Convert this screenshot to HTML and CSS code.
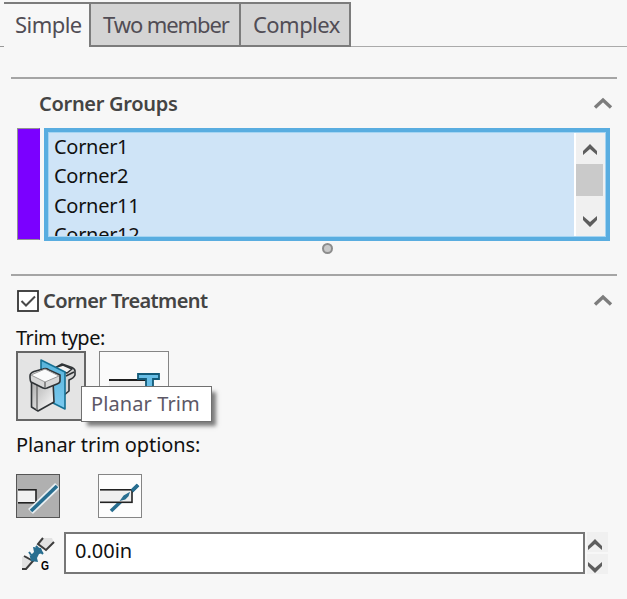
FILE: index.html
```html
<!DOCTYPE html>
<html lang="en">
<head>
    <meta charset="UTF-8">
    <meta name="viewport" content="width=device-width, initial-scale=1.0">
    <title>Corner Trim</title>
    <link rel="stylesheet" href="styles.css">
</head>
<body>

    <div class="tabs">
        <div class="tab-start"></div>
        <div class="tab active">Simple</div>
        <div class="tab tab-two">Two member</div>
        <div class="tab tab-complex">Complex</div>
        <div class="tab-rest"></div>
    </div>

    <div class="section groups">
        <div class="section-header">
            <h2>Corner Groups</h2>
            <svg class="chevron" width="20" height="13" viewBox="0 0 20 13"><path d="M2 10.5L10 3L18 10.5"/></svg>
        </div>
        <div class="group-row">
            <div class="swatch"></div>
            <div class="list">
                <ul>
                    <li>Corner1</li>
                    <li>Corner2</li>
                    <li>Corner11</li>
                    <li>Corner12</li>
                </ul>
                <div class="scrollbar">
                    <svg width="16" height="14" viewBox="0 0 16 14"><path d="M1 12V8L8 1L15 8V12L8 6Z"/></svg>
                    <div class="thumb"></div>
                    <svg class="down" width="16" height="14" viewBox="0 0 16 14"><path d="M1 2V6L8 13L15 6V2L8 8Z"/></svg>
                </div>
            </div>
        </div>
        <div class="grip"></div>
    </div>

    <div class="section treatment">
        <div class="section-header">
            <svg class="checkbox" width="22" height="22" viewBox="0 0 22 22">
                <rect x="1" y="1" width="20" height="20" fill="#fff" stroke="#333" stroke-width="1.8"/>
                <path d="M4.5 11L9 15.5L18 6.5" fill="none" stroke="#4a4a4a" stroke-width="2"/>
            </svg>
            <h2>Corner Treatment</h2>
            <svg class="chevron" width="20" height="13" viewBox="0 0 20 13"><path d="M2 10.5L10 3L18 10.5"/></svg>
        </div>

        <div class="label trim-label">Trim type:</div>
        <div class="trim-types">
            <div class="type-btn selected">
                <svg width="66" height="66" viewBox="0 0 66 66">
                    <defs>
                        <linearGradient id="metal" x1="0" y1="0" x2="1" y2="1">
                            <stop offset="0" stop-color="#aaa"/>
                            <stop offset="1" stop-color="#fff"/>
                        </linearGradient>
                        <linearGradient id="plane" x1="0" y1="0" x2="0" y2="1">
                            <stop offset="0" stop-color="#58b3da"/>
                            <stop offset="1" stop-color="#7bcaf0"/>
                        </linearGradient>
                    </defs>
                    <g stroke="#303437" stroke-width="1.6" stroke-linejoin="round">
                        <path d="M37 15L44 11L54 14.500Q57 16 57 18V22Q56 25 51 27V38L45 43L36 38Z" fill="#d6d6d6"/>
                        <path d="M39 14L45 12L54 16L49 20L38 17Z" fill="#f3f3f3"/>
                        <path d="M48 23L56 19" fill="none"/>
                        <path d="M23 7L47 19V56L23 44Z" fill="url(#plane)" stroke="#167194"/>
                        <path d="M13.500 27V54L20 58L36 49L35 28L26 32Z" fill="url(#metal)"/>
                        <path d="M19 31V57" fill="none" stroke="#777"/>
                        <path d="M12 23Q12 20 16 18.500L25 16Q28 15 31 17L42 22V28Q42 30 39 31L29 35Q26 36 23 34L13 29Q12 28 12 23Z" fill="#d7d7d7"/>
                        <path d="M13 22L27 16L41 23L27 29Z" fill="#fafafa" stroke="#999" stroke-width="1"/>
                        <path d="M27 29V34" stroke="#777"/>
                    </g>
                </svg>
            </div>
            <div class="type-btn">
                <svg width="66" height="66" viewBox="0 0 66 66">
                    <path d="M8 27H48V40H8Z" fill="#eee"/>
                    <path d="M8 27H48" stroke="#1d1d1d" stroke-width="1.8"/>
                    <path d="M37 21H58V26H52V42H45V26H37Z" fill="#67bde5" stroke="#125a78" stroke-width="1.8"/>
                </svg>
            </div>
            <div class="tooltip">Planar Trim</div>
        </div>

        <div class="label options-label">Planar trim options:</div>
        <div class="trim-options">
            <div class="option-btn selected">
                <svg width="41" height="41" viewBox="0 0 41 41">
                    <rect x="-1" y="13.800" width="19" height="13" fill="#f1f1f1" stroke="#222" stroke-width="1.6"/>
                    <path d="M12.500 35.500L39.500 9.500" stroke="#e9eff2" stroke-width="7"/>
                    <path d="M13 35L39 10" stroke="#286e90" stroke-width="3.600"/>
                </svg>
            </div>
            <div class="option-btn">
                <svg width="41" height="41" viewBox="0 0 41 41">
                    <path d="M11 35L38 9" stroke="#286e90" stroke-width="3.600"/>
                    <rect x="-1" y="13.800" width="33" height="12.500" fill="#efefef" stroke="#222" stroke-width="1.600"/>
                    <path d="M21 24L24 20L29 17L28 20L25 23Z" fill="#286e90" stroke="#286e90" stroke-width="1.200"/>
                    <path d="M32 15L38 9" stroke="#286e90" stroke-width="3.600"/>
                </svg>
            </div>
        </div>

        <div class="gap-row">
            <svg class="gap-icon" width="36" height="38" viewBox="0 0 36 38">
                <path d="M1 22L6 21L12 26L5 34L1 33Z" fill="#e2e2e2"/>
                <path d="M3 21L12 26L5 34L1 34" fill="none" stroke="#3c3c3c" stroke-width="2"/>
                <path d="M22 3H31L33 8L24 14L17 9Z" fill="#e2e2e2"/>
                <path d="M22 3L17 9L25 15L33 7" fill="none" stroke="#3c3c3c" stroke-width="2"/>
                <path d="M8 18L9 21L13 17L12 12L20 13L22 18L18 19L16 23L17 27L10 26Z" fill="#286e90"/>
                <path d="M8 17L14 25M15 11L22 19" stroke="#286e90" stroke-width="2"/>
                <text x="20" y="35" class="gap-letter" textLength="8" lengthAdjust="spacingAndGlyphs">G</text>
            </svg>
            <div class="gap-input">0.00in</div>
            <div class="spinner">
                <div class="spin"><svg width="16" height="14" viewBox="0 0 16 14"><path d="M1 12V8L8 1L15 8V12L8 6Z"/></svg></div>
                <div class="spin"><svg width="16" height="14" viewBox="0 0 16 14"><path d="M1 2V6L8 13L15 6V2L8 8Z"/></svg></div>
            </div>
        </div>
    </div>

</body>
</html>
```
FILE: styles.css
```css
* {
    box-sizing: border-box;
}

body {
    margin: 0;
    padding-top: 2px;
    height: 599px;
    overflow: hidden;
    background: #f7f7f7;
    font-family: "Noto Sans", "Open Sans", sans-serif;
    font-size: 20px;
    line-height: 28px;
    color: #111;
}

svg {
    display: block;
    flex-shrink: 0;
}

/* tabs */
.tabs {
    display: flex;
    height: 45px;
}

.tab-start {
    width: 4px;
    border-bottom: 1px solid #999;
}

.tab {
    height: 45px;
    padding: 7px 0 0 12px;
    border: 2px solid #7c7c7c;
    border-left: none;
    background: #d4d4d4;
    color: #514d55;
    font-size: 22px;
    line-height: 27px;
    letter-spacing: -0.55px;
    white-space: nowrap;
}

.tab.active {
    width: 87px;
    padding-left: 11px;
    border-bottom: none;
    background: #f7f7f7;
}

.tab-two {
    width: 150px;
    letter-spacing: -1.1px;
}

.tab-complex {
    width: 110px;
}

.tab-rest {
    flex: 1;
    border-bottom: 1px solid #aaa;
}

/* sections */
.section {
    margin: 0 10px 0 11px;
    border-top: 2px solid #a5a5a5;
}

.groups {
    margin-top: 30px;
    height: 197px;
}

.section-header {
    display: flex;
    align-items: center;
    height: 28px;
    margin-top: 11px;
    padding-right: 4px;
}

.groups .section-header {
    padding-left: 28px;
}

.treatment .section-header {
    padding-left: 6px;
}

h2 {
    margin: 0;
    font-size: 20px;
    font-weight: 600;
    letter-spacing: -0.3px;
    color: #444;
    white-space: nowrap;
}

.treatment h2 {
    letter-spacing: -0.6px;
}

.checkbox {
    margin-right: 4px;
}

.chevron {
    margin: 0 0 2px auto;
}

.chevron path {
    fill: none;
    stroke: #7d7d7d;
    stroke-width: 3.4;
}

.group-row {
    display: flex;
    gap: 4px;
    margin: 10px 7px 0 6px;
}

.swatch {
    width: 23px;
    height: 112px;
    border: 1px solid #929292;
    border-right-color: #7b00ff;
    background: #7b00ff;
}

.list {
    display: flex;
    flex: 1;
    height: 113px;
    padding: 1px;
    border: 4px solid #59ade0;
    outline: 1px solid #a5d4f2;
    outline-offset: -5px;
    background: #cfe4f7;
    overflow: hidden;
}

.list ul {
    flex: 1;
    height: 103px;
    margin: 0;
    padding: 0 0 0 5px;
    list-style: none;
    line-height: 29.3px;
    letter-spacing: -0.3px;
    overflow: hidden;
}

.list li:first-child {
    margin-top: -1px;
}

.scrollbar {
    display: flex;
    flex-direction: column;
    align-items: center;
    width: 31px;
    padding: 10px 2px 8px 0;
    border-left: 2px solid #fff;
    background: #f0f0f0;
}

.scrollbar path,
.spin path {
    fill: #5d5d5d;
}

.thumb {
    width: 27px;
    height: 32px;
    margin-top: 7px;
    background: #cacaca;
}

.scrollbar .down {
    margin-top: auto;
}

.grip {
    width: 11px;
    height: 11px;
    margin: 2px 0 0 311px;
    border: 2px solid #8c8c8c;
    border-radius: 50%;
    background: #c9c9c9;
}

/* trim type */
.label {
    height: 28px;
    margin-left: 5px;
    white-space: nowrap;
}

.trim-label {
    margin-top: 9px;
    letter-spacing: -0.5px;
}

.trim-types {
    display: flex;
    gap: 13px;
    position: relative;
    margin: -1px 0 0 5px;
}

.type-btn {
    width: 70px;
    height: 70px;
    padding: 1px;
    border: 1px solid #858585;
    background: #fafafa;
}

.type-btn.selected {
    border: 2px solid #666;
    padding: 0;
    background: #e4e4e4;
}

.tooltip {
    position: absolute;
    left: 65px;
    top: 35px;
    width: 131px;
    height: 36px;
    padding: 3px 0 0 9px;
    border: 1px solid #707070;
    background: #fff;
    box-shadow: 5px 5px 4px -1px rgba(0, 0, 0, 0.5);
    color: #5d5866;
    letter-spacing: 0.1px;
    white-space: nowrap;
}

.options-label {
    margin-top: 10px;
    letter-spacing: -0.1px;
}

.trim-options {
    display: flex;
    gap: 38px;
    margin: 15px 0 0 5px;
}

.option-btn {
    width: 44px;
    height: 44px;
    padding: 1px;
    border: 1px solid #858585;
    background: #fdfdfd;
}

.option-btn.selected {
    border-color: #555;
    background: #b0b0b0;
}

/* gap value */
.gap-row {
    display: flex;
    margin-top: 14px;
    padding-left: 10px;
}

.gap-icon {
    margin: 3px 7px 0 0;
}

.gap-letter {
    font-family: "Liberation Sans", sans-serif;
    font-size: 13px;
    font-weight: bold;
}

.gap-input {
    width: 521px;
    height: 42px;
    padding: 3px 0 0 9px;
    border: 2px solid #777;
    background: #fff;
}

.spinner {
    display: flex;
    flex-direction: column;
    gap: 2px;
    margin-left: 2px;
}

.spin {
    width: 21px;
    height: 20px;
    padding: 6px 0 0;
    background: #f0f0f0;
}
```
